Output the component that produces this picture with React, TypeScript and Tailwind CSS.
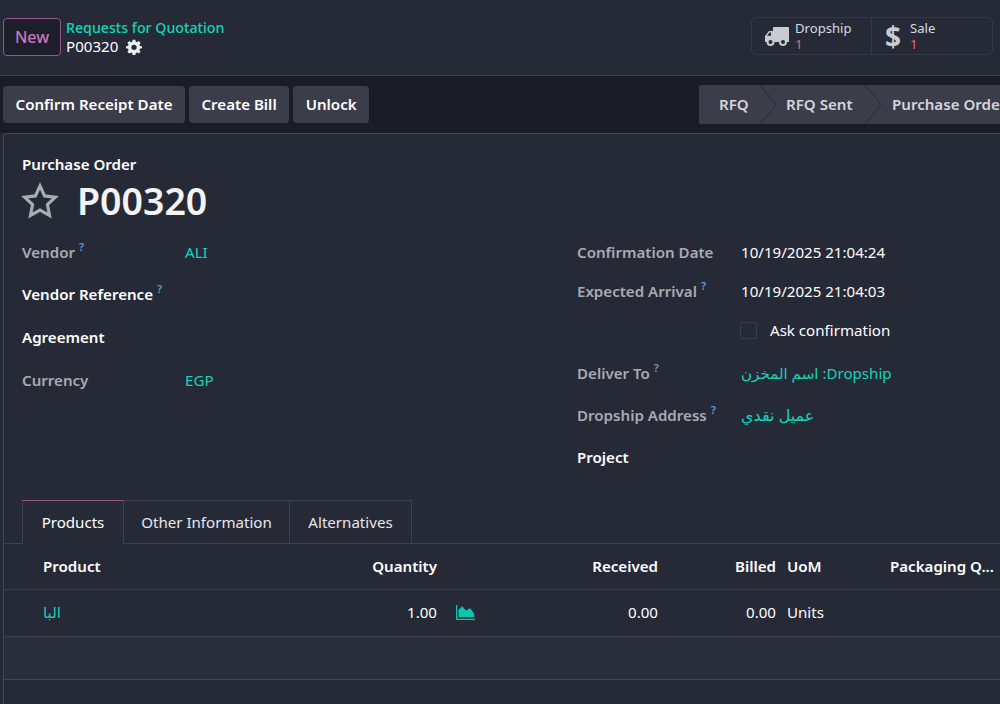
import React from "react";

const FONT = "font-['Noto_Sans','DejaVu_Sans',sans-serif]";

const Help = () => <sup className="ml-1 text-[11px] font-semibold text-[#5a9fd8] top-[-7px]">?</sup>;

interface FieldProps {
  label: string;
  dim?: boolean;
  help?: boolean;
  value?: string;
  link?: boolean;
  arabic?: boolean;
  h: string;
  labelW: string;
}

const Field: React.FC<FieldProps> = ({ label, dim, help, value, link, arabic, h, labelW }) =>
  <div className={`flex items-start text-[15.1px] leading-[22px] ${h}`}>
    <div className={`${labelW} shrink-0 font-semibold ${dim ? "text-[#a9abb3]" : "text-white"}`}>
      {label}
      {help && <Help />}
    </div>
    {value && <div className={`${link ? "text-[#14d4b8]" : "text-white"} ${arabic ? "text-[16px]" : ""}`}>{value}</div>}
  </div>

const Chevron = () =>
  <svg viewBox="0 0 17 39" className="absolute left-full top-0 h-[39px] w-[17px]" fill="none" stroke="#262a36" strokeWidth="1">
    <path d="M0 0L16 19.500L0 39" />
  </svg>

const Stat = ({ icon, label, w }: { icon: React.ReactNode; label: string; w: string }) =>
  <div className={`flex items-center ${w} h-[36px] pl-[13px] first:border-r border-[#353945]`}>
    {icon}
    <div className="text-[13.100px] leading-[16px] text-[#d8dae0]">
      <div>{label}</div>
      <div className="text-[#f0647a]">1</div>
    </div>
  </div>

const TableRow = ({ cells, className, head }: { cells: React.ReactNode[]; className: string; head?: boolean }) =>
  <div className={`grid grid-cols-[39px_394px_19px_202px_118px_11px_103px_1fr] items-center border-b border-[#3a3e4a] ${className} ${head ? "font-semibold" : ""}`}>
    {cells.map((c, i) => <div key={i} className="whitespace-nowrap">{c}</div>)}
  </div>

export default function App() {
  return (
    <div className={`${FONT} h-[704px] w-[1000px] overflow-hidden bg-[#262a36] text-white`}>
      <div className="flex h-[76px] items-start justify-between border-b border-[#3f424e] pr-[7px]">
        <div className="flex items-start pl-[3px] pt-[18px]">
          <button className="h-[38px] w-[58px] rounded-[4px] border border-[#96598f] bg-[#1d202a] text-[16px] font-medium text-[#c878c0]">New</button>
          <div className="ml-[5px]">
            <div className="text-[14.200px] leading-[20px] font-medium text-[#14d4b8]">Requests for Quotation</div>
            <div className="-mt-[1px] flex items-center text-[15.100px] leading-[19px]">
              P00320
              <svg viewBox="0 0 24 24" className="ml-[8px] h-[16px] w-[16px]" fill="#eceef2">
                <path fillRule="evenodd" d="M10 1h4l.6 3.100 1.900.8 2.600-1.800 2.800 2.800-1.800 2.600.8 1.900L24 11v3l-3.100.6-.8 1.900 1.800 2.600-2.800 2.800-2.600-1.800-1.900.8L14 24h-4l-.6-3.100-1.900-.8-2.600 1.800-2.800-2.800 1.800-2.600-.8-1.900L0 14v-3l3.100-.6.8-1.900L2.100 5.900l2.800-2.800 2.600 1.800 1.900-.8zM12 8.500a4 4 0 1 0 0 8 4 4 0 0 0 0-8z" />
              </svg>
            </div>
          </div>
        </div>
        <div className="mt-[17px] flex h-[38px] w-[242px] rounded-[5px] border border-[#353945]">
          <Stat
            w="w-[120px]"
            label="Dropship"
            icon={
              <svg viewBox="0 0 24 19" className="mr-[6px] h-[19px] w-[24px]" fill="#c9cbd1">
                <path d="M8 1a1 1 0 0 1 1-1h14a1 1 0 0 1 1 1v14H0V9l4-5h4zM6 5.500H4.500L2 8.800h4z" fillRule="evenodd" />
                <circle cx="5.500" cy="15" r="3" fill="#262a36" stroke="#c9cbd1" strokeWidth="2" />
                <circle cx="18" cy="15" r="3" fill="#262a36" stroke="#c9cbd1" strokeWidth="2" />
              </svg>
            }
          />
          <Stat
            w="flex-1"
            label="Sale"
            icon={<span className="mr-[10px] w-[15px] text-[28px] leading-none font-bold text-[#c9cbd1]">$</span>}
          />
        </div>
      </div>

      <div className="flex h-[57px] items-start justify-between bg-[#1b1d26] pt-[9px]">
        <div className="mt-[1px] flex gap-[4px] pl-[3px] text-[15.100px] font-semibold">
          <button className="h-[37px] rounded-[4px] bg-[#3b3d4a] px-[12.500px]">Confirm Receipt Date</button>
          <button className="h-[37px] rounded-[4px] bg-[#3b3d4a] px-[12.500px]">Create Bill</button>
          <button className="h-[37px] rounded-[4px] bg-[#3b3d4a] px-[12.500px]">Unlock</button>
        </div>
        <div className="flex h-[39px] w-[301px] overflow-hidden rounded-l-[2px] bg-[#3b3d4a] text-[15.100px] leading-[39px] font-semibold whitespace-nowrap text-[#d5d6dc]">
          <div className="relative w-[61px] shrink-0 pl-[20px]">RFQ<Chevron /></div>
          <div className="relative w-[105px] shrink-0 pl-[26px]">RFQ Sent<Chevron /></div>
          <div className="shrink-0 pl-[27px]">Purchase Order</div>
        </div>
      </div>

      <div className="ml-[3px] h-[571px] rounded-tl-[4px] border-t border-l border-[#454854]">
        <div className="pl-[18px] pt-[19px]">
          <div className="text-[15.100px] leading-[22px] font-semibold">Purchase Order</div>
          <div className="mt-[2px] flex h-[47px] items-center">
            <svg viewBox="0 0 24 24" className="h-[38px] w-[38px] -ml-[1px]" fill="none" stroke="#a9abb3" strokeWidth="2" strokeLinejoin="miter">
              <path d="M12 2.500l2.900 6.300 6.800.8-5 4.700 1.300 6.800-6-3.400-6 3.400 1.300-6.800-5-4.700 6.800-.8z" />
            </svg>
            <div className="ml-[18px] text-[37.500px] leading-[47px] font-semibold text-[#f3f4f6]">P00320</div>
          </div>

          <div className="mt-[17px] flex h-[259px]">
            <div className="w-[555px] shrink-0">
              <Field h="h-[42px]" labelW="w-[163px]" label="Vendor" dim help value="ALI" link />
              <Field h="h-[43px]" labelW="w-[163px]" label="Vendor Reference" help />
              <Field h="h-[43px]" labelW="w-[163px]" label="Agreement" />
              <Field h="h-[43px]" labelW="w-[163px]" label="Currency" dim value="EGP" link />
            </div>
            <div className="flex-1">
              <Field h="h-[39px]" labelW="w-[164px]" label="Confirmation Date" dim value="10/19/2025 21:04:24" />
              <Field h="h-[39px]" labelW="w-[164px]" label="Expected Arrival" dim help value="10/19/2025 21:04:03" />
              <div className="flex h-[43px] items-start pl-[163px] text-[15.100px] leading-[22px]">
                <div className="mt-[3px] h-[17px] w-[17px] rounded-[2px] border border-[#3b3e49] bg-[#262a36]"></div>
                <div className="ml-[13px]">Ask confirmation</div>
              </div>
              <Field h="h-[42px]" labelW="w-[164px]" label="Deliver To" dim help value="اسم المخزن :Dropship" link />
              <Field h="h-[42px]" labelW="w-[164px]" label="Dropship Address" dim help value="عميل نقدي" link arabic />
              <Field h="h-[42px]" labelW="w-[164px]" label="Project" />
            </div>
          </div>
        </div>

        <div className="flex h-[44px] items-end border-b border-[#3f424e] pl-[18px] text-[15.100px]">
          <div className="-mb-[1px] flex h-[44px] w-[102px] items-center justify-center border-x border-t border-x-[#3f424e] border-t-[#96598f] bg-[#262a36]">Products</div>
          <div className="flex h-[43px] w-[166px] items-center justify-center border-t border-r border-[#3f424e] text-[#e6e7eb]">Other Information</div>
          <div className="flex h-[43px] w-[122px] items-center justify-center border-t border-r border-[#3f424e] text-[#e6e7eb]">Alternatives</div>
        </div>

        <div className="text-[15.100px]">
          <TableRow
            head
            className="h-[46px]"
            cells={[
              "",
              <div className="flex justify-between"><span>Product</span><span>Quantity</span></div>,
              "",
              <div className="text-right">Received</div>,
              <div className="text-right">Billed</div>,
              "",
              "UoM",
              "Packaging Q...",
            ]}
          />
          <TableRow
            className="h-[47px] pb-[2px]"
            cells={[
              "",
              <div className="flex justify-between"><span className="text-[#14d4b8]">البا</span><span>1.00</span></div>,
              <svg viewBox="0 0 19 15" className="ml-[19px] h-[15px] w-[19px]" fill="#0fc4ae">
                <path d="M0 0h1.300v13.700H19V15H0zM2.500 12.300V5l3.500-3.700 4 4.300 4.300-2.300 4 5.700v3.300z" />
              </svg>,
              <div className="text-right">0.00</div>,
              <div className="text-right">0.00</div>,
              "",
              "Units",
              "",
            ]}
          />
          <div className="h-[43px] border-b border-[#454854] bg-[#2a2e3a]"></div>
        </div>
      </div>
    </div>
  );
}
